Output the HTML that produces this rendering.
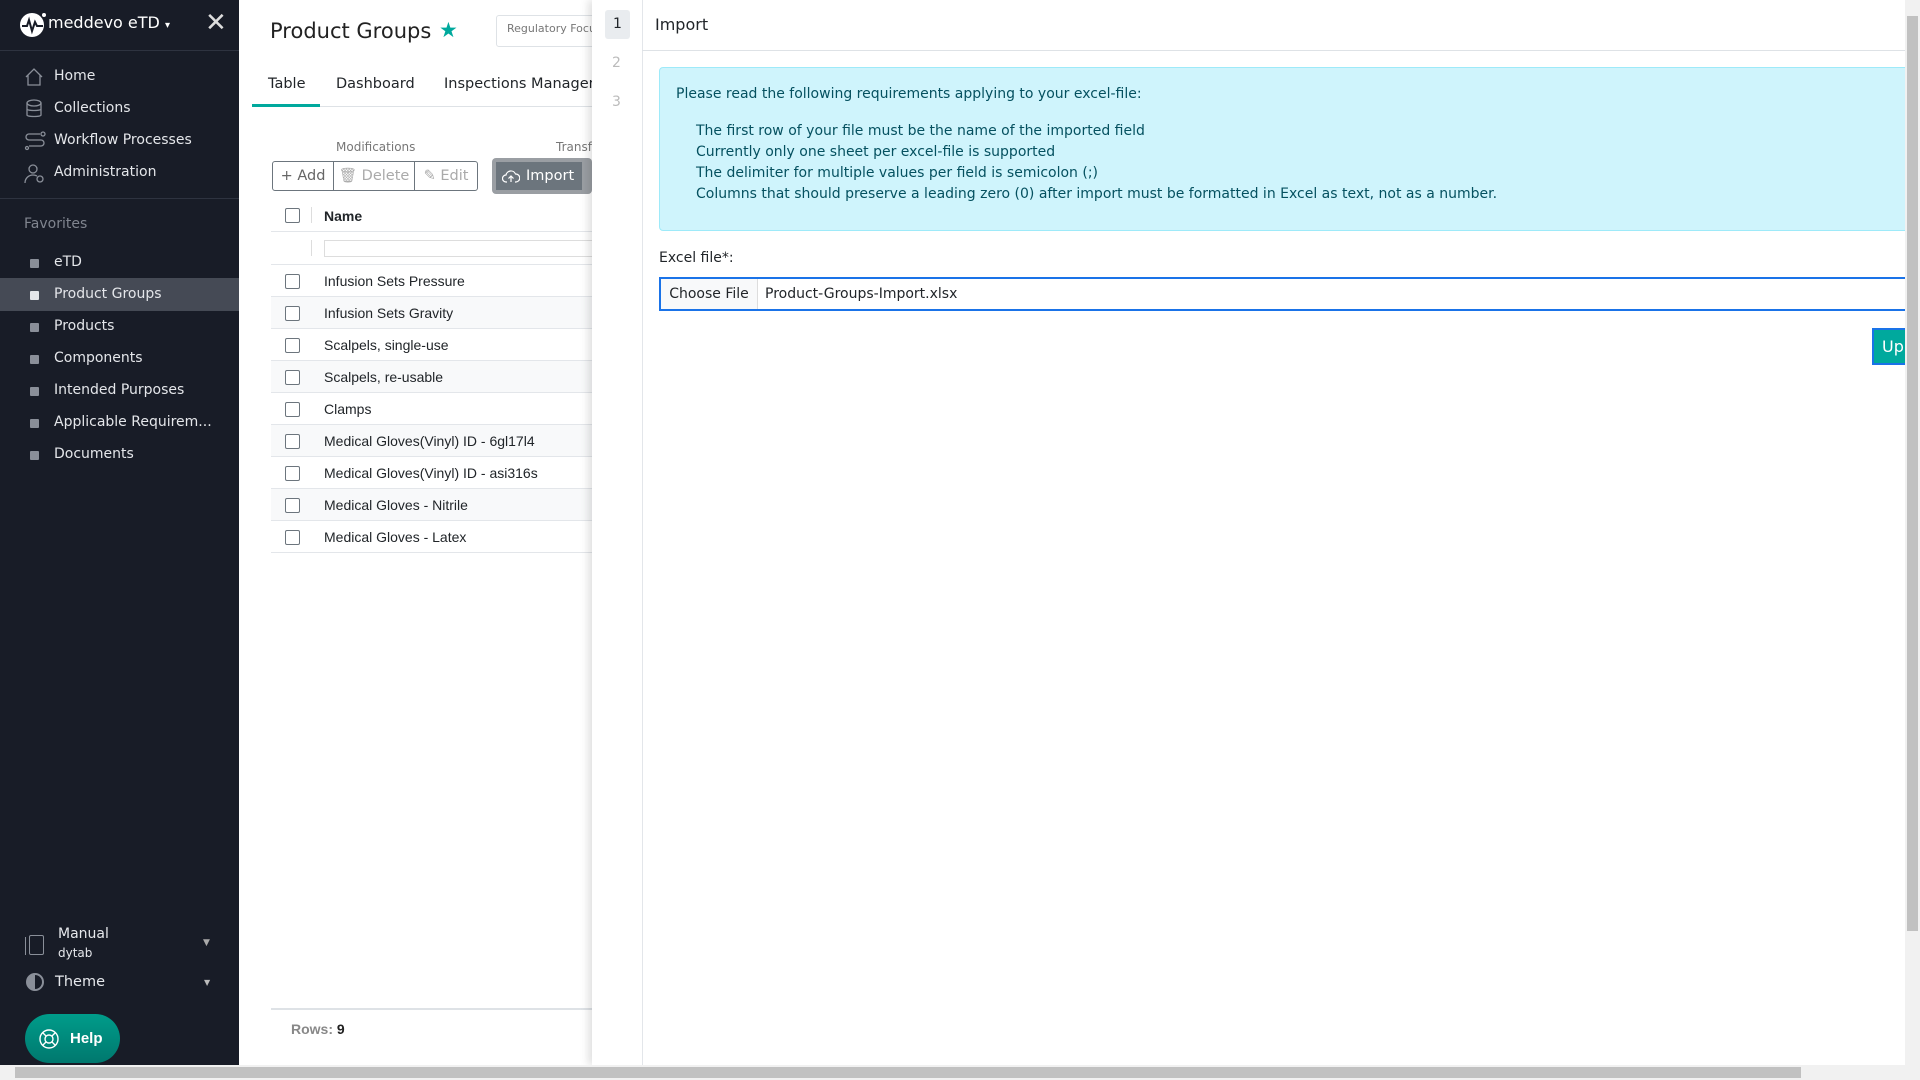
<!DOCTYPE html>
<html><head><meta charset="utf-8"><style>
*{box-sizing:border-box;margin:0;padding:0}
body{width:1920px;height:1080px;overflow:hidden;font-family:"DejaVu Sans","Liberation Sans",sans-serif;background:#fff;position:relative;color:#212529}
.a{position:absolute}
.sb{left:0;top:0;width:239px;height:1065px;background:#181c27;color:#e6e8ec}
.nav{font-size:14px;color:#e4e6ea}
.fav .dot{position:absolute;left:30px;width:9px;height:9px;background:#8a8f99;border-radius:1px}
.row{left:271px;width:321px;height:32px;border-bottom:1px solid #e3e6ea;font-family:"Liberation Sans",sans-serif;font-size:14px}
.row .cb{position:absolute;left:14px;top:9px;width:15px;height:15px;border:1px solid #6c757d;border-radius:2px;background:#fff}
.row span{position:absolute;left:53px;top:8px}
.btn{height:30px;border:1px solid #6c757d;font-size:14.5px;line-height:28px;color:#aaa;text-align:center;background:#fff}
</style></head><body>
<div class="a sb">
  <svg class="a" style="left:18px;top:10px" width="30" height="30" viewBox="0 0 30 30"><circle cx="14" cy="15" r="12" fill="#fff"/><path d="M4 16h5l2-6 3 11 3-9 2 4h6" stroke="#181c27" stroke-width="2" fill="none"/><circle cx="26" cy="5" r="2" fill="#fff"/></svg>
  <div class="a" style="left:48px;top:13px;font-size:16px;color:#fff">meddevo eTD <span style="font-size:10px">▾</span></div>
  <div class="a" style="left:205px;top:8px;font-size:26px;color:#ddd;font-weight:300">✕</div>
  <div class="a" style="left:0;top:50px;width:239px;height:1px;background:#2e3340"></div>
  <div class="nav">
    <svg class="a" style="left:24px;top:67px" width="20" height="20" viewBox="0 0 20 20" fill="none" stroke="#8a8f99" stroke-width="1.3"><path d="M2 10L10 2l8 8M4 8v10h12V8"/></svg>
    <div class="a" style="left:54px;top:68px">Home</div>
    <svg class="a" style="left:25px;top:99px" width="18" height="20" viewBox="0 0 18 20" fill="none" stroke="#8a8f99" stroke-width="1.3"><ellipse cx="9" cy="4" rx="7" ry="3"/><path d="M2 4v12c0 2 14 2 14 0V4M2 10c0 2 14 2 14 0"/></svg>
    <div class="a" style="left:54px;top:100px">Collections</div>
    <svg class="a" style="left:24px;top:131px" width="22" height="20" viewBox="0 0 22 20" fill="none" stroke="#8a8f99" stroke-width="1.3"><path d="M16 3H5a3 3 0 000 6h12a3 3 0 010 6H5"/><circle cx="19" cy="3" r="2"/><circle cx="3" cy="17" r="1.5"/></svg>
    <div class="a" style="left:54px;top:132px">Workflow Processes</div>
    <svg class="a" style="left:24px;top:163px" width="22" height="22" viewBox="0 0 22 22" fill="none" stroke="#8a8f99" stroke-width="1.3"><circle cx="9" cy="6" r="4"/><path d="M1 20c0-5 4-8 8-8 2 0 3 .5 4 1"/><circle cx="16" cy="16" r="3"/></svg>
    <div class="a" style="left:54px;top:164px">Administration</div>
  </div>
  <div class="a" style="left:0;top:198px;width:239px;height:1px;background:#2e3340"></div>
  <div class="a" style="left:24px;top:216px;font-size:14px;color:#80858f">Favorites</div>
  <div class="a" style="left:0;top:278px;width:239px;height:33px;background:#454a55"></div>
  <div class="fav nav">
    <div class="dot" style="top:259px"></div><div class="a" style="left:54px;top:254px">eTD</div>
    <div class="dot" style="top:291px;background:#e4e6ea"></div><div class="a" style="left:54px;top:286px">Product Groups</div>
    <div class="dot" style="top:323px"></div><div class="a" style="left:54px;top:318px">Products</div>
    <div class="dot" style="top:355px"></div><div class="a" style="left:54px;top:350px">Components</div>
    <div class="dot" style="top:387px"></div><div class="a" style="left:54px;top:382px">Intended Purposes</div>
    <div class="dot" style="top:419px"></div><div class="a" style="left:54px;top:414px">Applicable Requirem...</div>
    <div class="dot" style="top:451px"></div><div class="a" style="left:54px;top:446px">Documents</div>
  </div>
  <div class="a" style="left:25px;top:937px;width:3px;height:18px;border-left:1px solid #8a8f99"></div>
  <div class="a" style="left:29px;top:935px;width:15px;height:20px;border:1.3px solid #8a8f99;border-radius:2px"></div>
  <div class="a" style="left:58px;top:926px;font-size:14px">Manual</div>
  <div class="a" style="left:58px;top:946px;font-size:12px">dytab</div>
  <div class="a" style="left:203px;top:938px;font-size:9px;color:#aaa">▼</div>
  <div class="a" style="left:26px;top:973px;width:18px;height:18px;border-radius:50%;border:2px solid #8a8f99;background:linear-gradient(90deg,#8a8f99 50%,transparent 50%)"></div>
  <div class="a" style="left:55px;top:974px;font-size:14.5px">Theme</div>
  <div class="a" style="left:204px;top:978px;font-size:8px;color:#bbb">▼</div>
  <div class="a" style="left:25px;top:1014px;width:95px;height:49px;border-radius:25px;background:linear-gradient(#009c8a,#00786e);color:#fff;font-weight:bold;font-size:15px;line-height:49px;padding-left:45px;font-family:'Liberation Sans',sans-serif">Help</div>
  <svg class="a" style="left:38px;top:1028px" width="22" height="22" viewBox="0 0 22 22" fill="none" stroke="#fff" stroke-width="1.4"><circle cx="11" cy="11" r="9"/><circle cx="11" cy="11" r="4"/><path d="M5 5l3 3M17 5l-3 3M5 17l3-3M17 17l-3-3"/></svg>
</div>

<div class="a" style="left:270px;top:19px;font-size:21px;color:#222">Product Groups</div>
<div class="a" style="left:439px;top:18px;font-size:21px;color:#00a99d">★</div>
<div class="a" style="left:496px;top:15px;width:120px;height:32px;border:1px solid #dee2e6;border-radius:3px;font-size:11px;color:#777;padding:6px 10px;overflow:hidden;white-space:nowrap">Regulatory Focus</div>
<div class="a" style="left:268px;top:76px;font-size:14.5px">Table</div>
<div class="a" style="left:336px;top:76px;font-size:14.5px">Dashboard</div>
<div class="a" style="left:444px;top:76px;font-size:14.5px;white-space:nowrap">Inspections Management</div>
<div class="a" style="left:252px;top:106px;width:340px;height:1px;background:#dee2e6"></div>
<div class="a" style="left:252px;top:104px;width:68px;height:3px;background:#00a99d"></div>
<div class="a" style="left:336px;top:140px;font-size:12px;color:#777">Modifications</div>
<div class="a" style="left:556px;top:140px;font-size:12px;color:#777">Transfer</div>
<div class="a btn" style="left:272px;top:161px;width:62px;border-radius:3px 0 0 3px;color:#666">+ Add</div>
<div class="a btn" style="left:333px;top:161px;width:82px">🗑 Delete</div>
<div class="a btn" style="left:414px;top:161px;width:64px;border-radius:0 3px 3px 0">✎ Edit</div>
<div class="a" style="left:492px;top:158px;width:100px;height:36px;background:#9a9ea3;border-radius:4px"></div>
<div class="a" style="left:496px;top:162px;width:86px;height:28px;background:#6c757d;color:#fff;font-size:14.5px;line-height:28px;padding-left:30px">Import</div>
<svg class="a" style="left:502px;top:169px" width="18" height="14" viewBox="0 0 18 14" fill="none" stroke="#fff" stroke-width="1.2"><path d="M5 13H4a3.5 3.5 0 010-7 5 5 0 019.5-1A3.5 3.5 0 0114 13h-1M9 13V7M6.5 9.5L9 7l2.5 2.5"/></svg>

<div class="a" style="left:271px;top:199px;width:321px;height:33px;border-bottom:1px solid #e3e6ea;font-family:'Liberation Sans',sans-serif;font-size:14px;font-weight:bold">
 <div class="a" style="left:14px;top:9px;width:15px;height:15px;border:1px solid #6c757d;border-radius:2px"></div>
 <div class="a" style="left:40px;top:8px;width:1px;height:16px;background:#ddd"></div>
 <span class="a" style="left:53px;top:9px">Name</span></div>
<div class="a" style="left:271px;top:232px;width:321px;height:33px;border-bottom:1px solid #e3e6ea">
 <div class="a" style="left:40px;top:8px;width:1px;height:16px;background:#ddd"></div>
 <div class="a" style="left:53px;top:8px;width:270px;height:17px;border:1px solid #ddd"></div></div>
<div class="a row" style="top:265px"><div class="cb"></div><span>Infusion Sets Pressure</span></div>
<div class="a row" style="top:297px;background:#f8f9fa"><div class="cb"></div><span>Infusion Sets Gravity</span></div>
<div class="a row" style="top:329px"><div class="cb"></div><span>Scalpels, single-use</span></div>
<div class="a row" style="top:361px;background:#f8f9fa"><div class="cb"></div><span>Scalpels, re-usable</span></div>
<div class="a row" style="top:393px"><div class="cb"></div><span>Clamps</span></div>
<div class="a row" style="top:425px;background:#f8f9fa"><div class="cb"></div><span>Medical Gloves(Vinyl) ID - 6gl17l4</span></div>
<div class="a row" style="top:457px"><div class="cb"></div><span>Medical Gloves(Vinyl) ID - asi316s</span></div>
<div class="a row" style="top:489px;background:#f8f9fa"><div class="cb"></div><span>Medical Gloves - Nitrile</span></div>
<div class="a row" style="top:521px"><div class="cb"></div><span>Medical Gloves - Latex</span></div>
<div class="a" style="left:271px;top:1008px;width:321px;height:2px;background:#dee2e6"></div>
<div class="a" style="left:291px;top:1021px;font-family:'Liberation Sans',sans-serif;font-size:14px;color:#888;font-weight:bold">Rows: <span style="color:#222">9</span></div>

<div class="a" style="left:592px;top:0;width:1313px;height:1065px;background:#fff;box-shadow:-4px 0 8px rgba(0,0,0,.12)"></div>
<div class="a" style="left:642px;top:0;width:1px;height:1065px;background:#e3e6ea"></div>
<div class="a" style="left:605px;top:10px;width:25px;height:29px;background:#e9ecef;border-radius:3px;text-align:center;line-height:29px;font-size:14px">1</div>
<div class="a" style="left:612px;top:55px;font-size:14px;color:#bbb">2</div>
<div class="a" style="left:612px;top:94px;font-size:14px;color:#bbb">3</div>
<div class="a" style="left:655px;top:15px;font-size:16px">Import</div>
<div class="a" style="left:642px;top:50px;width:1263px;height:1px;background:#dee2e6"></div>
<div class="a" style="left:659px;top:67px;width:1250px;height:164px;background:#cff4fc;border:1px solid #9eeaf9;border-radius:4px;color:#055160;font-size:14px">
 <div class="a" style="left:16px;top:18px">Please read the following requirements applying to your excel-file:</div>
 <div class="a" style="left:36px;top:53px;line-height:21px">The first row of your file must be the name of the imported field<br>Currently only one sheet per excel-file is supported<br>The delimiter for multiple values per field is semicolon (;)<br>Columns that should preserve a leading zero (0) after import must be formatted in Excel as text, not as a number.</div>
</div>
<div class="a" style="left:659px;top:250px;font-size:14px">Excel file*:</div>
<div class="a" style="left:659px;top:277px;width:1250px;height:34px;border:2px solid #1a73e8;font-size:14px">
 <div class="a" style="left:0;top:0;width:97px;height:30px;background:#f8f9fa;border-right:1px solid #ddd;line-height:30px;text-align:center">Choose File</div>
 <div class="a" style="left:104px;top:7px">Product-Groups-Import.xlsx</div>
</div>
<div class="a" style="left:1872px;top:328px;width:40px;height:37px;background:#00a99d;border:2px solid #1a73e8;color:#fff;font-size:16px;line-height:33px;padding-left:8px;overflow:hidden">Up</div>

<div class="a" style="left:1905px;top:0;width:15px;height:1065px;background:#f1f1f1"></div>
<div class="a" style="left:1907px;top:16px;width:11px;height:915px;background:#c1c1c1"></div>
<div class="a" style="left:0;top:1065px;width:1920px;height:15px;background:#f1f1f1"></div>
<div class="a" style="left:15px;top:1067px;width:1786px;height:11px;background:#c1c1c1"></div>
</body></html>
